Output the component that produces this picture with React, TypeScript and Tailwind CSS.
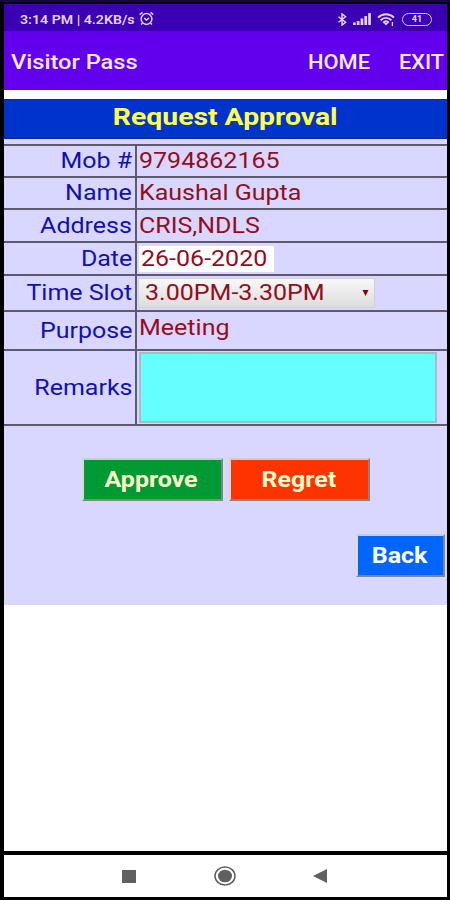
import type { ReactNode } from 'react';

const rows: { label: string; height: string; value: ReactNode }[] = [
  { label: 'Mob #', height: 'h-[32px]', value: <Value>9794862165</Value> },
  { label: 'Name', height: 'h-[32px]', value: <Value>Kaushal Gupta</Value> },
  { label: 'Address', height: 'h-[33px]', value: <Value>CRIS,NDLS</Value> },
  {
    label: 'Date',
    height: 'h-[33px]',
    value: (
      <div className="flex h-[26px] w-[135px] items-center bg-white pl-[2px]">
        <Value>26-06-2020</Value>
      </div>
    ),
  },
  {
    label: 'Time Slot',
    height: 'h-[36px]',
    value: (
      <div className="-ml-px flex h-[30px] w-[237px] items-center justify-between border border-[#d0d0d8] bg-gradient-to-b from-[#f8f8f8] to-[#dddddd] pr-[5px] pl-[6px]">
        <Value>3.00PM-3.30PM</Value>
        <svg className="h-[6px] w-[7px]" viewBox="0 0 7 6">
          <path d="M0.5 0h6L3.5 6z" fill="#8b0000" />
        </svg>
      </div>
    ),
  },
  {
    label: 'Purpose',
    height: 'h-[39px]',
    value: (
      <div className="pb-[6px]">
        <Value>Meeting</Value>
      </div>
    ),
  },
  {
    label: 'Remarks',
    height: 'h-[75px]',
    value: <div className="h-[71px] w-[298px] border-2 border-[#a8bcc8] bg-[#66ffff]" />,
  },
];

function Value({ children }: { children: ReactNode }) {
  return <span className="block origin-left scale-x-[1.137] whitespace-nowrap text-[#940d1c]">{children}</span>;
}

function StatusBar() {
  return (
    <div className="flex h-[27px] items-center bg-[#3b00b3] pt-[3px] pr-[15px] pl-[16px] text-[#e4d4ff]">
      <span className="block w-[118px] origin-left scale-x-[1.09] text-[13px] font-semibold whitespace-nowrap">
        3:14 PM | 4.2KB/s
      </span>
      <svg className="-mt-px h-[15px] w-[17px]" viewBox="0 0 16 15" fill="none" stroke="currentColor" strokeWidth="1.5">
        <circle cx="8" cy="8" r="5.4" />
        <path d="M1.2 3.6L4 1.3M14.8 3.6L12 1.3M3.8 12.2L2.6 13.6M12.2 12.2l1.2 1.4M5.6 7L8 9l2.6-2" />
      </svg>
      <div className="ml-auto flex items-center">
        <svg className="mr-[5px] h-[13px] w-[11px]" viewBox="0 0 11 14" fill="none" stroke="currentColor" strokeWidth="1.6">
          <path d="M1.2 4l7.6 6-3.8 3V1l3.8 3-7.6 6" />
        </svg>
        <svg className="mr-[6px] h-[12px] w-[18px]" viewBox="0 0 18 12" fill="currentColor">
          <path d="M0 9.5h2.7V12H0zM3.8 8h2.7v4H3.8zM7.6 5.5h2.7V12H7.6zM11.4 3h2.7v9h-2.7zM15.2 0h2.7v12h-2.7z" />
        </svg>
        <svg className="mr-[7px] h-[13px] w-[18px]" viewBox="0 0 18 13" fill="none" stroke="currentColor" strokeWidth="2">
          <path d="M1 4.6C5.5.2 12.5.2 17 4.6M3.6 7.2c3.2-3 7.6-3 10.8 0M6.2 9.7c1.6-1.5 4-1.5 5.6 0" />
          <path d="M6.8 10h4.4L9 12.6z" fill="currentColor" stroke="none" />
          <path d="M15.4 9v4" strokeWidth="1.3" />
        </svg>
        <div className="flex h-[13px] w-[30px] items-center justify-center rounded-full border-[1.5px] border-[#d6c4ff] text-[9px] leading-none font-bold">
          41
        </div>
      </div>
    </div>
  );
}

function Button({ label, className }: { label: string; className: string }) {
  return (
    <button
      className={`flex h-[43px] items-center justify-center border-2 border-t-[#c8cfc8] border-r-[#858585] border-b-[#858585] border-l-[#d4dcd8] font-bold ${className}`}
    >
      <span className="-ml-[2px] block scale-x-[1.135]">{label}</span>
    </button>
  );
}

export default function App() {
  return (
    <div className="flex h-[900px] w-[450px] flex-col overflow-hidden border-t-2 border-t-[#14083c] bg-black pt-[2px] pr-[3px] pb-[3px] pl-[4px] font-['Roboto',sans-serif] text-[22px] leading-none">
      <StatusBar />

      <header className="flex h-[59px] items-center bg-[#6200ee] pt-[4px] pl-[8px] text-[21px] font-medium text-[#f4eaff]">
        <h1 className="-ml-px origin-left scale-x-[1.125] whitespace-nowrap">Visitor Pass</h1>
        <span className="ml-auto w-[91px] origin-left scale-x-[1.04]">HOME</span>
        <span className="w-[48px] origin-left scale-x-[1.03]">EXIT</span>
      </header>

      <main className="flex h-[761px] flex-col bg-white pt-[9px]">
        <section className="h-[506px] bg-[#d9d7ff]">
          <div className="flex h-[40px] items-center justify-center border-y border-[#0a2a90] bg-[#0033cc] pb-[4px] text-[24px] font-bold text-[#ffff4d]">
            <h2 className="scale-x-[1.18]">Request Approval</h2>
          </div>

          <div className="mt-[5px] border-b-2 border-[#5c5a6c]">
            {rows.map((row) => (
              <div key={row.label} className={`flex border-t-2 border-[#5c5a6c] ${row.height}`}>
                <div className="flex w-[133px] items-center justify-end border-r-2 border-[#5c5a6c] pr-[3px]">
                  <span className="block origin-right scale-x-[1.135] whitespace-nowrap text-[#1010b4]">{row.label}</span>
                </div>
                <div className="flex flex-1 items-center pl-[2px]">{row.value}</div>
              </div>
            ))}
          </div>

          <div className="mt-[32px] flex gap-[6px] pl-[78px]">
            <Button label="Approve" className="w-[141px] bg-[#009933] text-[#ffffcc]" />
            <Button label="Regret" className="w-[141px] bg-[#ff3300] text-[#ffffcc]" />
          </div>
          <div className="mt-[33px] flex justify-end pr-[2px]">
            <Button label="Back" className="w-[89px] bg-[#0066ff] text-white" />
          </div>
        </section>
      </main>

      {/* Android navigation bar */}
      <nav className="mt-[4px] flex h-[42px] items-center bg-white text-[#606060]">
        <div className="ml-[118px] h-[13px] w-[14px] bg-[#606060]" />
        <svg className="ml-[78px] h-[20px] w-[22px]" viewBox="0 0 22 20" fill="none" stroke="currentColor">
          <ellipse cx="11" cy="10" rx="10" ry="9" strokeWidth="1.5" />
          <ellipse cx="11" cy="10" rx="7" ry="6.3" fill="currentColor" stroke="none" />
        </svg>
        <svg className="ml-[77px] h-[14px] w-[14px]" viewBox="0 0 14 14">
          <path d="M14 0v14L0 7z" fill="currentColor" />
        </svg>
      </nav>
    </div>
  );
}
